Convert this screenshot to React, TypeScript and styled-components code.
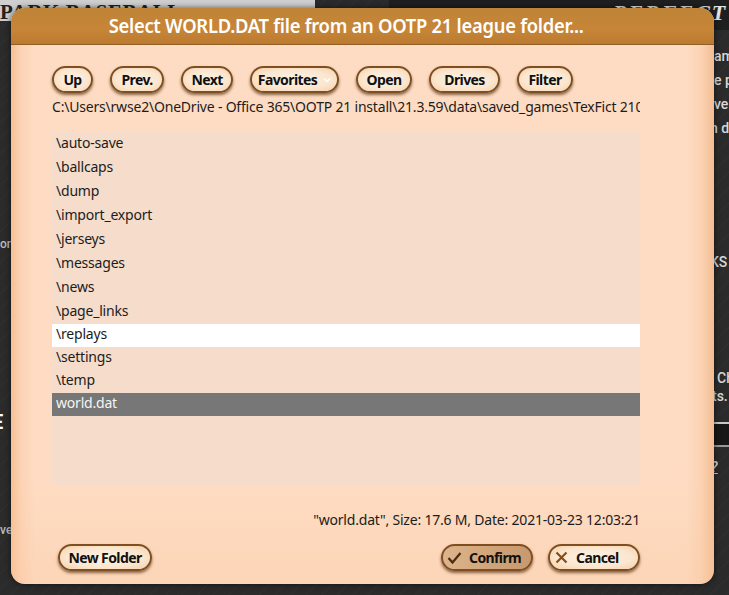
import React from "react";
import styled, { createGlobalStyle } from "styled-components";

const GlobalStyle = createGlobalStyle`
  html, body {
    margin: 0;
    padding: 0;
    height: 100%;
    overflow: hidden;
    background: #262626;
  }
`;

const uiFont = `"Noto Sans", "Open Sans", sans-serif`;

const Page = styled.div`
  position: relative;
  width: 729px;
  height: 595px;
  overflow: hidden;
  display: flex;
  justify-content: space-between;
  background: repeating-linear-gradient(135deg, #2b2b2b 0, #2b2b2b 9px, #303030 10px, #2b2b2b 11px);
  font-family: "Roboto", sans-serif;
  color: #d8d8d8;
`;

const LeftPane = styled.div`
  width: 315px;
  display: flex;
  flex-direction: column;
`;

const Masthead = styled.div`
  height: 21px;
  background: #cfcfcf;
  color: #222;
  font: bold 21px/24px "Liberation Serif", serif;
  white-space: nowrap;
  overflow: hidden;
  letter-spacing: 0.5px;
`;

const LeftSnippet = styled.div<{ $top: number; $size?: number; $bold?: boolean; $x?: number }>`
  margin-top: ${(p) => p.$top}px;
  margin-left: ${(p) => p.$x ?? 0}px;
  font-size: ${(p) => p.$size ?? 12}px;
  font-weight: ${(p) => (p.$bold ? 700 : 500)};
  line-height: 18px;
  color: ${(p) => (p.$bold ? "#fff" : "#bdbdbd")};
`;

const RightPane = styled.div`
  width: 340px;
  display: flex;
  flex-direction: column;
`;

const Banner = styled.div`
  height: 30px;
  padding-left: 224px;
  background: #1f1f1f;
  color: #e4e4e4;
  font: italic bold 22px/26px "Liberation Serif", serif;
  letter-spacing: 2px;
  white-space: nowrap;
  overflow: hidden;
`;

const RightText = styled.div<{ $top?: number; $x?: number; $link?: boolean }>`
  margin-top: ${(p) => p.$top ?? 0}px;
  padding-left: ${(p) => p.$x ?? 321}px;
  font-size: 14px;
  font-weight: 500;
  line-height: 24px;
  white-space: nowrap;
  text-decoration: ${(p) => (p.$link ? "underline" : "none")};
  font-style: ${(p) => (p.$link ? "italic" : "normal")};
`;

const DarkBand = styled.div`
  height: 21px;
  margin-top: 14px;
  background: #171717;
  border-top: 2px solid #c8c8c8;
  border-bottom: 2px solid #999;
`;

const Dialog = styled.div`
  position: absolute;
  left: 11px;
  top: 8px;
  width: 703px;
  height: 576px;
  display: flex;
  flex-direction: column;
  border-radius: 14px;
  overflow: hidden;
  font-family: ${uiFont};
  color: #111;
  background: linear-gradient(
    90deg,
    #f6bf94 0,
    #fcd3b5 10px,
    #fedcc3 24px,
    #fedcc3 675px,
    #fbd3b4 690px,
    #f3bd92 703px
  );
  box-shadow: 0 0 6px rgba(0, 0, 0, 0.6);
`;

const TitleBar = styled.div`
  flex: none;
  height: 37px;
  display: flex;
  align-items: center;
  justify-content: center;
  box-sizing: border-box;
  padding: 0 33px 1px 0;
  background: linear-gradient(180deg, #bf8437 0, #c78537 60%, #bb7a30 100%);
  border-bottom: 1px solid #8f5f26;
  color: #fff;
`;

const TitleText = styled.span`
  font-size: 20px;
  font-weight: 600;
  letter-spacing: -0.3px;
  white-space: nowrap;
  transform: scaleX(0.92);
`;

const Body = styled.div`
  flex: 1;
  display: flex;
  flex-direction: column;
  padding: 21px 74px 12px 41px;
  background: linear-gradient(180deg, transparent 0, transparent 80%, rgba(250, 200, 160, 0.35) 100%);
`;

const Toolbar = styled.div`
  display: flex;
  gap: 17px;
`;

const Pill = styled.button<{ $active?: boolean; $width: number; $icon?: boolean }>`
  all: unset;
  box-sizing: border-box;
  flex: none;
  height: 27px;
  width: ${(p) => p.$width}px;
  padding: 0 ${(p) => (p.$icon ? 0 : 2)}px 0 ${(p) => (p.$icon ? 4 : 2)}px;
  display: inline-flex;
  align-items: center;
  justify-content: ${(p) => (p.$icon ? "flex-start" : "center")};
  gap: ${(p) => (p.$icon ? 7 : 6)}px;
  border-radius: 14px;
  border: 2.5px solid #7f4f22;
  font-family: ${uiFont};
  font-size: 14px;
  font-weight: 700;
  line-height: 1;
  letter-spacing: -0.6px;
  color: #111;
  white-space: nowrap;
  background: ${(p) =>
    p.$active
      ? "linear-gradient(90deg, #ddb48c 0, #cfa377 60%, #c69a6e 100%)"
      : "radial-gradient(ellipse at 50% 50%, #fdf3e6 0, #fbe6cf 60%, #f4cfa9 100%)"};
  box-shadow: 0 2px 3px rgba(70, 40, 10, 0.65);
`;

const Caret = styled.svg`
  width: 8px;
  height: 6px;
`;

const PathLine = styled.div`
  margin-top: 4px;
  height: 20px;
  font-size: 14px;
  line-height: 20px;
  letter-spacing: -0.2px;
  white-space: nowrap;
  overflow: hidden;
  color: #1c1c1c;
`;

const FileList = styled.ul`
  list-style: none;
  margin: 15px 0 0;
  padding: 0;
  height: 353px;
  background: #f5dccb;
`;

const FileRow = styled.li<{ $state?: "hover" | "selected"; $tight?: boolean }>`
  height: ${(p) => (p.$tight ? 23 : 24)}px;
  padding-left: 4px;
  font-size: 14px;
  line-height: ${(p) => (p.$tight ? 20 : 22)}px;
  letter-spacing: -0.2px;
  color: ${(p) => (p.$state === "selected" ? "#f4f4f4" : "#1c1c1c")};
  background: ${(p) =>
    p.$state === "selected" ? "#777777" : p.$state === "hover" ? "#ffffff" : "transparent"};
`;

const Status = styled.div`
  margin-top: 25px;
  height: 20px;
  text-align: right;
  font-size: 14px;
  line-height: 20px;
  letter-spacing: -0.2px;
  color: #1c1c1c;
`;

const Footer = styled.div`
  margin-top: 14px;
  padding-left: 6px;
  display: flex;
  align-items: center;
  gap: 15px;
`;

const Spacer = styled.div`
  flex: 1;
`;

const Glyph = styled.svg`
  width: 15px;
  height: 15px;
  flex: none;
  fill: none;
  stroke-width: 2.2;
`;

const entries = [
  "\\auto-save",
  "\\ballcaps",
  "\\dump",
  "\\import_export",
  "\\jerseys",
  "\\messages",
  "\\news",
  "\\page_links",
];

export default function App() {
  return (
    <Page>
      <GlobalStyle />
      <LeftPane>
        <Masthead>PARK BASEBALL</Masthead>
        <LeftSnippet $top={214}>on</LeftSnippet>
        <LeftSnippet $top={160} $size={20} $bold $x={-8}>
          E
        </LeftSnippet>
        <LeftSnippet $top={90}>ve</LeftSnippet>
      </LeftPane>
      <RightPane>
        <Banner>PERFECT TEAM</Banner>
        <RightText $top={14} $x={325}>am</RightText>
        <RightText $x={325}>e p</RightText>
        <RightText $x={325}>ve</RightText>
        <RightText>n di</RightText>
        <RightText $top={110} $x={321}>KS</RightText>
        <RightText $top={92} $x={328}>Ch</RightText>
        <RightText $top={-6} $x={323}>ts.</RightText>
        <DarkBand />
        <RightText $top={8} $x={322} $link>?</RightText>
      </RightPane>
      <Dialog>
        <TitleBar>
          <TitleText>Select WORLD.DAT file from an OOTP 21 league folder...</TitleText>
        </TitleBar>
        <Body>
          <Toolbar>
            <Pill $width={41}>Up</Pill>
            <Pill $width={54}>Prev.</Pill>
            <Pill $width={52}>Next</Pill>
            <Pill $width={89}>
              Favorites
              <Caret viewBox="0 0 8 6">
                <path d="M1 1.5 L4 4.5 L7 1.5" fill="none" stroke="#fff" strokeWidth="1.4" />
              </Caret>
            </Pill>
            <Pill $width={56}>Open</Pill>
            <Pill $width={71}>Drives</Pill>
            <Pill $width={56}>Filter</Pill>
          </Toolbar>
          <PathLine>C:\Users\rwse2\OneDrive - Office 365\OOTP 21 install\21.3.59\data\saved_games\TexFict 210</PathLine>
          <FileList>
            {entries.map((name) => (
              <FileRow key={name}>{name}</FileRow>
            ))}
            <FileRow $state="hover" $tight>\replays</FileRow>
            <FileRow $tight>\settings</FileRow>
            <FileRow $tight>\temp</FileRow>
            <FileRow $state="selected" $tight>world.dat</FileRow>
          </FileList>
          <Status>"world.dat", Size: 17.6 M, Date: 2021-03-23 12:03:21</Status>
          <Footer>
            <Pill $width={94}>New Folder</Pill>
            <Spacer />
            <Pill $active $icon $width={92}>
              <Glyph viewBox="0 0 15 15" stroke="#4a2c10">
                <path d="M1.5 8 L5.5 12.5 L13.5 3" />
              </Glyph>
              Confirm
            </Pill>
            <Pill $icon $width={92}>
              <Glyph viewBox="0 0 15 15" stroke="#8a4b1c">
                <path d="M2.5 2.5 L12.5 12.5 M12.5 2.5 L2.5 12.5" />
              </Glyph>
              Cancel
            </Pill>
          </Footer>
        </Body>
      </Dialog>
    </Page>
  );
}
